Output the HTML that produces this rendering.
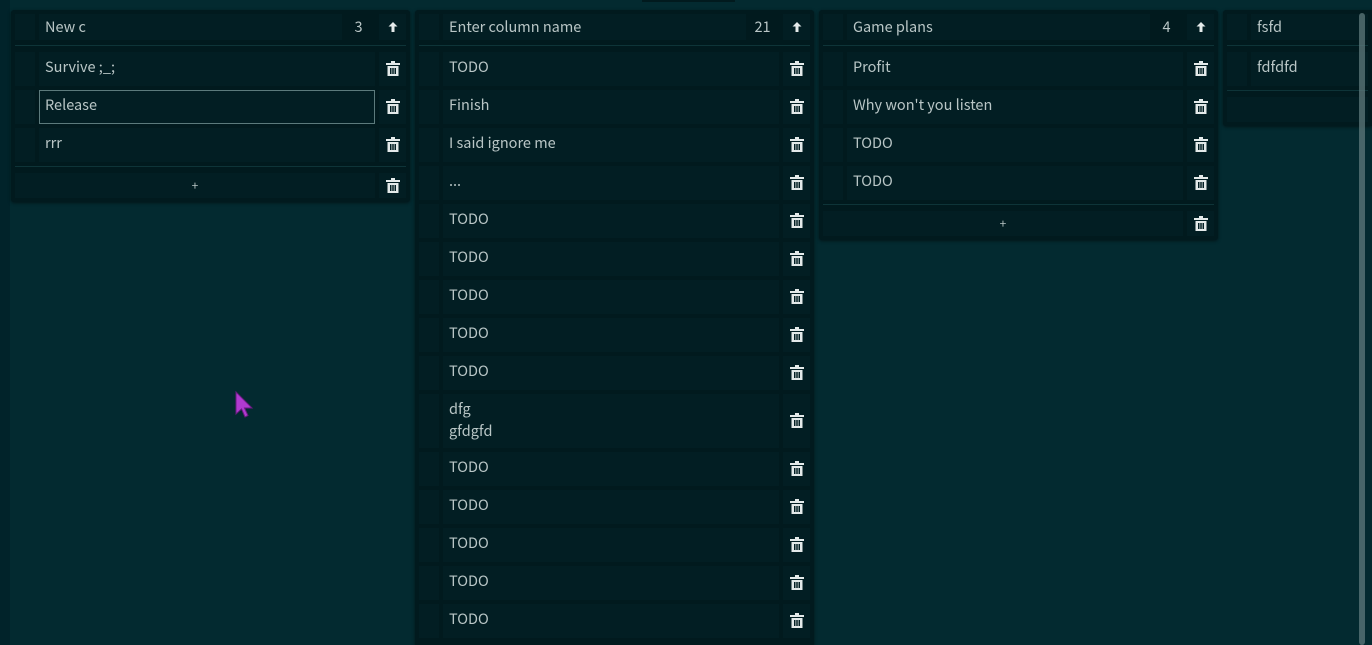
<!DOCTYPE html><html style="width:1372px;height:645px;overflow:hidden"><head><style>
*{box-sizing:border-box;margin:0;padding:0}
body{width:1372px;height:645px;overflow:hidden;background:#032a30;font-family:"Noto Sans CJK SC","Liberation Sans",sans-serif;font-size:14.5px;color:#b9c6c6;position:relative}
.strip{position:absolute;left:0;top:0;width:10px;height:645px;background:#01232a}
.topbar{position:absolute;left:642px;top:0;width:93px;height:2px;background:#011a1e}
.col{position:absolute;top:10px;width:399px;background:#011a1e;border-radius:3px;padding:4px;box-shadow:0 1px 3px rgba(0,0,0,.5);overflow:hidden}
.row{display:flex;height:34px;margin-bottom:4px}
.row.h{height:26px;margin-bottom:0}
.hd{width:20px;background:#021e23;margin-right:4px}
.f{flex:1;background:#021e23;padding:4px 6px;line-height:22px;white-space:pre}
.h .f{padding:0 6px;line-height:26px}
.cnt{width:33px;text-align:center;line-height:26px;background:#011a1e}
.b{width:27px;margin-left:4px;background:#021e23;display:flex;align-items:center;justify-content:center;padding-bottom:1px}
.sep{height:1px;background:#0e3438;margin:5px 0 6px}
.add{flex:1;background:#021e23;text-align:center;line-height:25px;font-size:12px}
.sel{border:1px solid #5c7a7c;padding:3px 5px}
</style></head><body>
<div class="strip"></div><div class="topbar"></div>
<svg width="0" height="0" style="position:absolute"><defs><symbol id="t" viewBox="0 0 14 15"><rect x="5" y="0" width="4" height="2" fill="#e4eaea"/><rect x="0" y="2" width="14" height="2" fill="#e4eaea"/><path d="M1.5 5h11v10h-11z M4 7v6h1.5v-6z M6.25 7v6h1.5v-6z M8.5 7v6h1.5v-6z" fill="#e4eaea" fill-rule="evenodd"/></symbol><symbol id="u" viewBox="0 0 10 10"><path d="M5 0L0.5 4.5h3V10h3V4.5h3z" fill="#e4eaea"/></symbol></defs></svg>

<div class="col" style="left:11px">
<div class="row h"><div class="hd"></div><div class="f">New c</div><div class="cnt">3</div><div class="b"><svg width="10" height="10"><use href="#u"/></svg></div></div>
<div class="sep"></div>
<div class="row"><div class="hd"></div><div class="f">Survive ;_;</div><div class="b"><svg width="14" height="15"><use href="#t"/></svg></div></div>
<div class="row"><div class="hd"></div><div class="f sel">Release</div><div class="b"><svg width="14" height="15"><use href="#t"/></svg></div></div>
<div class="row"><div class="hd"></div><div class="f">rrr</div><div class="b"><svg width="14" height="15"><use href="#t"/></svg></div></div>
<div class="sep" style="margin-top:1px"></div>
<div class="row" style="height:25px;margin:0"><div class="add">+</div><div class="b"><svg width="14" height="15"><use href="#t"/></svg></div></div>
</div>

<div class="col" style="left:415px;height:635px;border-radius:3px 3px 0 0">
<div class="row h"><div class="hd"></div><div class="f">Enter column name</div><div class="cnt">21</div><div class="b"><svg width="10" height="10"><use href="#u"/></svg></div></div>
<div class="sep"></div>
<div class="row"><div class="hd"></div><div class="f">TODO</div><div class="b"><svg width="14" height="15"><use href="#t"/></svg></div></div>
<div class="row"><div class="hd"></div><div class="f">Finish</div><div class="b"><svg width="14" height="15"><use href="#t"/></svg></div></div>
<div class="row"><div class="hd"></div><div class="f">I said ignore me</div><div class="b"><svg width="14" height="15"><use href="#t"/></svg></div></div>
<div class="row"><div class="hd"></div><div class="f">...</div><div class="b"><svg width="14" height="15"><use href="#t"/></svg></div></div>
<div class="row"><div class="hd"></div><div class="f">TODO</div><div class="b"><svg width="14" height="15"><use href="#t"/></svg></div></div>
<div class="row"><div class="hd"></div><div class="f">TODO</div><div class="b"><svg width="14" height="15"><use href="#t"/></svg></div></div>
<div class="row"><div class="hd"></div><div class="f">TODO</div><div class="b"><svg width="14" height="15"><use href="#t"/></svg></div></div>
<div class="row"><div class="hd"></div><div class="f">TODO</div><div class="b"><svg width="14" height="15"><use href="#t"/></svg></div></div>
<div class="row"><div class="hd"></div><div class="f">TODO</div><div class="b"><svg width="14" height="15"><use href="#t"/></svg></div></div>
<div class="row" style="height:54px"><div class="hd"></div><div class="f">dfg
gfdgfd</div><div class="b"><svg width="14" height="15"><use href="#t"/></svg></div></div>
<div class="row"><div class="hd"></div><div class="f">TODO</div><div class="b"><svg width="14" height="15"><use href="#t"/></svg></div></div>
<div class="row"><div class="hd"></div><div class="f">TODO</div><div class="b"><svg width="14" height="15"><use href="#t"/></svg></div></div>
<div class="row"><div class="hd"></div><div class="f">TODO</div><div class="b"><svg width="14" height="15"><use href="#t"/></svg></div></div>
<div class="row"><div class="hd"></div><div class="f">TODO</div><div class="b"><svg width="14" height="15"><use href="#t"/></svg></div></div>
<div class="row"><div class="hd"></div><div class="f">TODO</div><div class="b"><svg width="14" height="15"><use href="#t"/></svg></div></div>
</div>

<div class="col" style="left:819px">
<div class="row h"><div class="hd"></div><div class="f">Game plans</div><div class="cnt">4</div><div class="b"><svg width="10" height="10"><use href="#u"/></svg></div></div>
<div class="sep"></div>
<div class="row"><div class="hd"></div><div class="f">Profit</div><div class="b"><svg width="14" height="15"><use href="#t"/></svg></div></div>
<div class="row"><div class="hd"></div><div class="f">Why won't you listen</div><div class="b"><svg width="14" height="15"><use href="#t"/></svg></div></div>
<div class="row"><div class="hd"></div><div class="f">TODO</div><div class="b"><svg width="14" height="15"><use href="#t"/></svg></div></div>
<div class="row"><div class="hd"></div><div class="f">TODO</div><div class="b"><svg width="14" height="15"><use href="#t"/></svg></div></div>
<div class="sep" style="margin-top:1px"></div>
<div class="row" style="height:25px;margin:0"><div class="add">+</div><div class="b"><svg width="14" height="15"><use href="#t"/></svg></div></div>
</div>

<div class="col" style="left:1223px;width:149px;border-radius:3px 0 0 3px">
<div class="row h"><div class="hd"></div><div class="f">fsfd</div></div>
<div class="sep"></div>
<div class="row"><div class="hd"></div><div class="f">fdfdfd</div></div>
<div class="sep" style="margin-top:1px"></div>
<div class="row" style="height:25px;margin:0"><div class="add"></div></div>
</div>
<div style="position:absolute;left:1359px;top:13px;width:6px;height:632px;background:#5f7a7c;opacity:.75;border-radius:3px"></div>
<svg style="position:absolute;left:234px;top:390px" width="22" height="30" viewBox="0 0 22 30"><path d="M2 2L2 24L7.5 19L11 27L14 25.5L10.5 18L18 18Z" fill="#b03ad0" stroke="#6a1a80" stroke-width="1"/></svg>
</body></html>
